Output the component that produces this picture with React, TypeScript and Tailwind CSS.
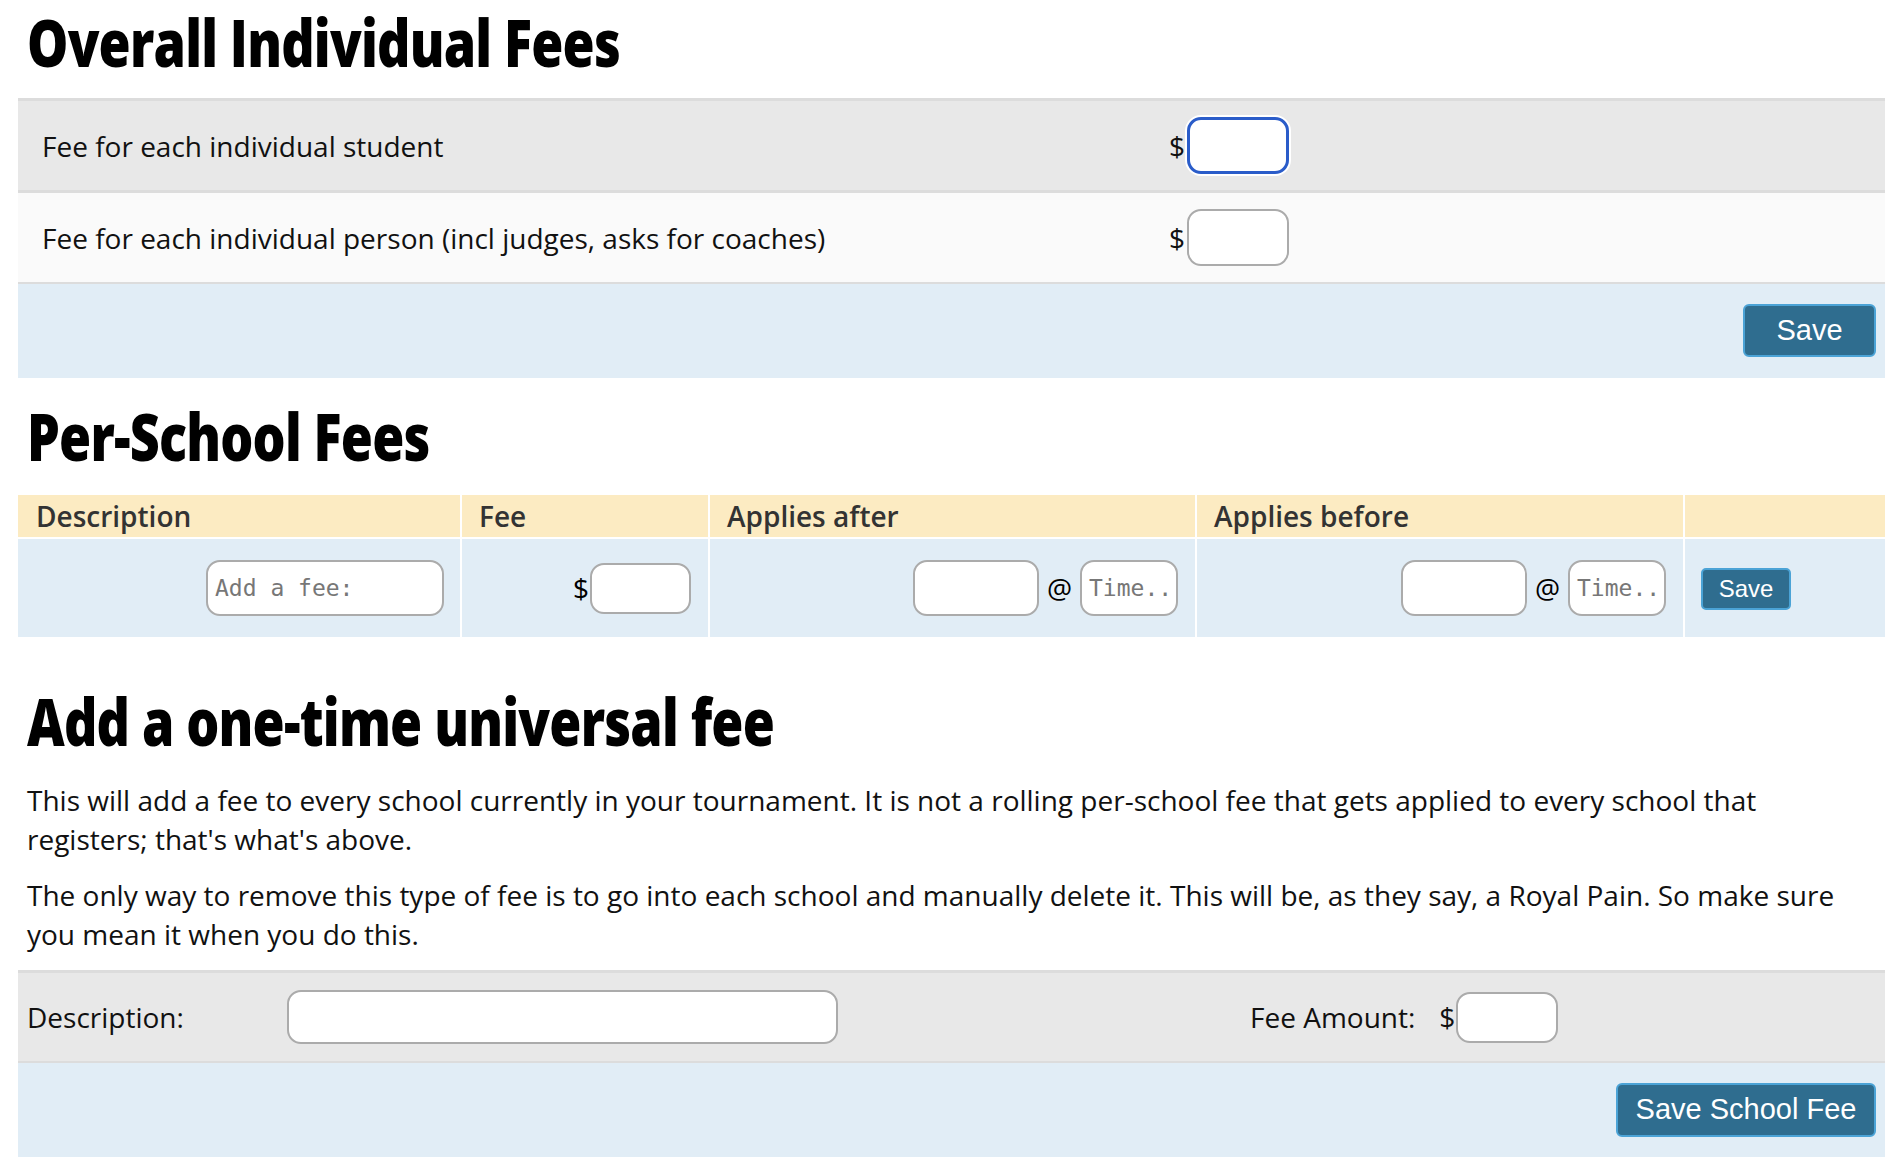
const FeeInput = ({ focused = false, w = "w-[102px]", h = "h-[57px]" }: { focused?: boolean; w?: string; h?: string }) => (
  <div
    className={`${w} ${h} rounded-[14px] bg-white ${
      focused ? "border-[3px] border-[#2a5cc9] ring-2 ring-white" : "border-2 border-[#ababab]"
    }`}
  />
)

const PlaceholderInput = ({ text, w, h = "h-[56px]" }: { text: string; w: string; h?: string }) => (
  <div className={`${w} ${h} flex items-center rounded-[14px] border-2 border-[#ababab] bg-white pl-[7px] overflow-hidden`}>
    <span className="font-['DejaVu_Sans_Mono','Liberation_Mono',monospace] text-[23px] text-[#777] whitespace-nowrap">{text}</span>
  </div>
)

// narrow bold headline, squeezed Open Sans stands in for the condensed face
const Title = ({ children, className = "" }: { children: string; className?: string }) => (
  <h1 className={`h-[65px] pl-[9px] ${className}`}>
    <span className="inline-block origin-left scale-x-[0.8] whitespace-nowrap font-['Open_Sans',sans-serif] font-extrabold text-[65px] leading-none tracking-[-1px] text-black">
      {children}
    </span>
  </h1>
)

const App = () => {
  return (
    <div className="w-[1898px] min-h-[1164px] bg-white pl-[18px] pr-[13px] font-['Open_Sans',sans-serif] text-[#111]">
      {/* Overall individual */}
      <Title className="mt-[10px] mb-[23px]">Overall Individual Fees</Title>
      <div className="flex flex-col">
        <div className="flex items-center h-[92px] bg-[#e8e8e8] border-t-[3px] border-[#dcdcdc]">
          <span className="w-[1151px] pl-[24px] text-[28px]">Fee for each individual student</span>
          <span className="text-[28px] pr-[2px]">$</span>
          <FeeInput focused />
        </div>
        <div className="flex items-center h-[92px] bg-[#fafafa] border-t-[3px] border-[#dcdcdc]">
          <span className="w-[1151px] pl-[24px] text-[28px]">Fee for each individual person (incl judges, asks for coaches)</span>
          <span className="text-[28px] pr-[2px]">$</span>
          <FeeInput />
        </div>
        <div className="flex justify-end items-start h-[96px] bg-[#e1edf6] border-t-2 border-[#dcdcdc] pt-[20px] pr-[9px]">
          <button className="w-[133px] h-[53px] rounded-[6px] bg-[#2f6d8f] border-2 border-[#4ba3d6] text-white text-[29px] font-['Liberation_Sans',sans-serif]">
            Save
          </button>
        </div>
      </div>

      {/* Per-school */}
      <Title className="mt-[26px] mb-[26px]">Per-School Fees</Title>
      <div className="grid grid-cols-[442px_246px_485px_486px_200px] gap-[2px] bg-white">
        <div className="h-[42px] bg-[#fcebc2] pl-[18px] flex items-center text-[28px] font-semibold text-[#333]">Description</div>
        <div className="h-[42px] bg-[#fcebc2] pl-[17px] flex items-center text-[28px] font-semibold text-[#333]">Fee</div>
        <div className="h-[42px] bg-[#fcebc2] pl-[17px] flex items-center text-[28px] font-semibold text-[#333]">Applies after</div>
        <div className="h-[42px] bg-[#fcebc2] pl-[17px] flex items-center text-[28px] font-semibold text-[#333]">Applies before</div>
        <div className="h-[42px] bg-[#fcebc2]" />

        <div className="h-[98px] bg-[#e1edf6] flex items-center justify-end pr-[16px]">
          <PlaceholderInput text="Add a fee:" w="w-[238px]" />
        </div>
        <div className="h-[98px] bg-[#e1edf6] flex items-center justify-end pr-[17px]">
          <span className="text-[28px] pr-[1px] text-black">$</span>
          <FeeInput w="w-[101px]" h="h-[51px]" />
        </div>
        <div className="h-[98px] bg-[#e1edf6] flex items-center justify-end pr-[17px] gap-[8px]">
          <FeeInput w="w-[126px]" h="h-[56px]" />
          <span className="text-[28px] text-black">@</span>
          <PlaceholderInput text="Time.." w="w-[98px]" />
        </div>
        <div className="h-[98px] bg-[#e1edf6] flex items-center justify-end pr-[17px] gap-[8px]">
          <FeeInput w="w-[126px]" h="h-[56px]" />
          <span className="text-[28px] text-black">@</span>
          <PlaceholderInput text="Time.." w="w-[98px]" />
        </div>
        <div className="h-[98px] bg-[#e1edf6] flex items-center pl-[16px]">
          <button className="w-[90px] h-[42px] mt-[2px] rounded-[5px] bg-[#2f6d8f] border-2 border-[#4ba3d6] text-white text-[24px] font-['Liberation_Sans',sans-serif]">
            Save
          </button>
        </div>
      </div>

      {/* One-time fee */}
      <Title className="mt-[52px] mb-[27px]">Add a one-time universal fee</Title>
      <div className="pl-[9px] text-[28px] leading-[39px] whitespace-nowrap">
        <p>
          This will add a fee to every school currently in your tournament. It is not a rolling per-school fee that gets applied to every school that
          <br />
          registers; that's what's above.
        </p>
        <p className="mt-[17px]">
          The only way to remove this type of fee is to go into each school and manually delete it. This will be, as they say, a Royal Pain. So make sure
          <br />
          you mean it when you do this.
        </p>
      </div>
      <div className="mt-[16px] flex flex-col">
        <div className="flex items-center h-[91px] bg-[#e8e8e8] border-t-[3px] border-[#dcdcdc]">
          <span className="w-[269px] pl-[9px] text-[28px]">Description:</span>
          <div className="w-[551px] h-[54px] rounded-[14px] border-2 border-[#ababab] bg-white" />
          <span className="ml-[412px] text-[28px]">Fee Amount:</span>
          <span className="ml-[24px] text-[28px] pr-[1px]">$</span>
          <FeeInput w="w-[102px]" h="h-[51px]" />
        </div>
        <div className="flex justify-end items-start h-[96px] bg-[#e1edf6] border-t-2 border-[#dcdcdc] pt-[20px] pr-[9px]">
          <button className="w-[260px] h-[54px] rounded-[6px] bg-[#2f6d8f] border-2 border-[#4ba3d6] text-white text-[29px] font-['Liberation_Sans',sans-serif]">
            Save School Fee
          </button>
        </div>
      </div>
    </div>
  )
}

export default App
